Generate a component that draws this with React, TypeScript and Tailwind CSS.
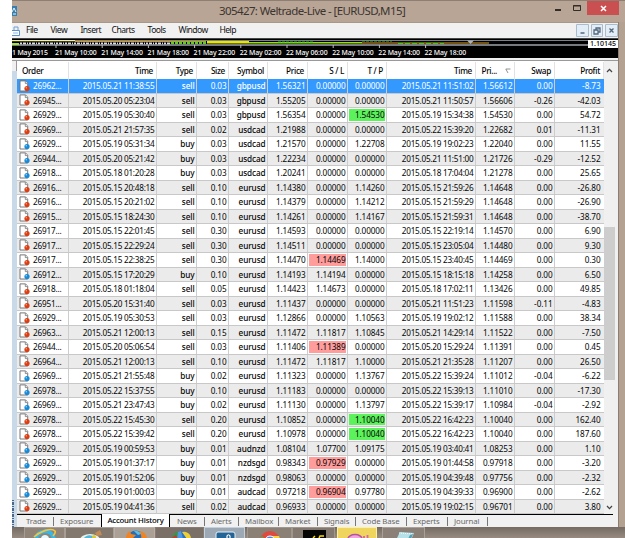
import { ReactNode } from "react";
import clsx from "clsx";

type Trade = {
  order: string;
  openTime: string;
  type: "buy" | "sell";
  size: string;
  symbol: string;
  price: string;
  sl: string;
  tp: string;
  closeTime: string;
  closePrice: string;
  swap: string;
  profit: string;
  hit?: "sl" | "tp";
};

const parseTrade = (line: string): Trade => {
  const f = line.split(" ");
  return {
    order: f[0] + "...",
    openTime: "2015.05." + f[1] + " " + f[2],
    type: f[3] as Trade["type"],
    size: f[4],
    symbol: f[5],
    price: f[6],
    sl: f[7],
    tp: f[8],
    closeTime: "2015.05." + f[9] + " " + f[10],
    closePrice: f[11],
    swap: f[12],
    profit: f[13],
    hit: f[14] as Trade["hit"],
  };
};

const trades = `26962 21 11:38:55 sell 0.03 gbpusd 1.56321 0.00000 0.00000 21 11:51:02 1.56612 0.00 -8.73
26945 20 05:23:04 sell 0.03 gbpusd 1.55205 0.00000 0.00000 21 11:50:57 1.56606 -0.26 -42.03
26929 19 05:30:40 sell 0.03 gbpusd 1.56354 0.00000 1.54530 19 15:34:38 1.54530 0.00 54.72 tp
26969 21 21:57:35 sell 0.02 usdcad 1.21988 0.00000 0.00000 22 15:39:20 1.22682 0.01 -11.31
26929 19 05:31:34 buy 0.03 usdcad 1.21570 0.00000 1.22708 19 19:02:23 1.22040 0.00 11.55
26944 20 05:21:42 buy 0.03 usdcad 1.22234 0.00000 0.00000 21 11:51:00 1.21726 -0.29 -12.52
26918 18 01:20:28 buy 0.03 usdcad 1.20241 0.00000 0.00000 18 17:04:04 1.21278 0.00 25.65
26916 15 20:48:18 sell 0.10 eurusd 1.14380 0.00000 1.14260 15 21:59:26 1.14648 0.00 -26.80
26916 15 20:21:02 sell 0.10 eurusd 1.14379 0.00000 1.14212 15 21:59:29 1.14648 0.00 -26.90
26915 15 18:24:30 sell 0.10 eurusd 1.14261 0.00000 1.14167 15 21:59:31 1.14648 0.00 -38.70
26917 15 22:01:45 sell 0.30 eurusd 1.14593 0.00000 0.00000 15 22:19:14 1.14570 0.00 6.90
26917 15 22:29:24 sell 0.30 eurusd 1.14511 0.00000 0.00000 15 23:05:04 1.14480 0.00 9.30
26917 15 22:38:25 sell 0.30 eurusd 1.14470 1.14469 1.14000 15 23:40:45 1.14469 0.00 0.30 sl
26912 15 17:20:29 buy 0.10 eurusd 1.14193 1.14194 0.00000 15 18:15:18 1.14258 0.00 6.50
26918 18 01:18:04 sell 0.05 eurusd 1.14423 1.14673 0.00000 18 17:02:11 1.13426 0.00 49.85
26951 20 15:31:40 sell 0.03 eurusd 1.11437 0.00000 0.00000 21 11:51:23 1.11598 -0.11 -4.83
26929 19 05:30:53 sell 0.03 eurusd 1.12866 0.00000 1.10563 19 19:02:12 1.11588 0.00 38.34
26963 21 12:00:13 sell 0.15 eurusd 1.11472 1.11817 1.10845 21 14:29:14 1.11522 0.00 -7.50
26944 20 05:06:54 sell 0.03 eurusd 1.11406 1.11389 0.00000 20 15:29:24 1.11391 0.00 0.45 sl
26964 21 12:00:13 sell 0.10 eurusd 1.11472 1.11817 1.10000 21 21:35:28 1.11207 0.00 26.50
26969 21 21:55:48 buy 0.02 eurusd 1.11323 0.00000 1.13767 22 15:39:24 1.11012 -0.04 -6.22
26978 22 15:37:55 buy 0.10 eurusd 1.11183 0.00000 0.00000 22 15:39:13 1.11010 0.00 -17.30
26969 21 23:47:43 buy 0.02 eurusd 1.11130 0.00000 1.13797 22 15:39:17 1.10984 -0.04 -2.92
26978 22 15:45:30 sell 0.20 eurusd 1.10852 0.00000 1.10040 22 16:42:23 1.10040 0.00 162.40 tp
26978 22 15:39:42 sell 0.20 eurusd 1.10978 0.00000 1.10040 22 16:42:23 1.10040 0.00 187.60 tp
26929 19 00:59:53 buy 0.01 audnzd 1.08104 1.07700 1.09175 19 03:40:41 1.08253 0.00 1.10
26929 19 01:37:17 buy 0.01 nzdsgd 0.98343 0.97929 0.00000 19 01:44:58 0.97918 0.00 -3.20 sl
26929 19 01:52:06 buy 0.01 nzdsgd 0.98063 0.00000 0.00000 19 04:39:48 0.97756 0.00 -2.32
26929 19 01:00:03 buy 0.01 audcad 0.97218 0.96904 0.97780 19 04:39:33 0.96900 0.00 -2.62 sl
26929 19 04:41:36 sell 0.02 audcad 0.96933 0.00000 0.00000 19 19:02:15 0.96701 0.00 3.80`
  .split("\n")
  .map(parseTrade);

const columns =
  "grid grid-cols-[52px_88px_40px_32px_39px_40px_40px_39px_89px_39px_40px_49px]";

const OrderIcon = ({ type }: { type: Trade["type"] }) => (
  <svg width="11" height="12" viewBox="0 0 11 12" className="shrink-0">
    <path d="M1 .9h5.6l2.1 2.4V11H1z" fill="#fff" stroke="#777" />
    <path d="M6.3 1v2.6h2.4" fill="#eee" stroke="#777" strokeWidth=".8" />
    <circle
      cx="8"
      cy="8.6"
      r="2.6"
      fill={type === "sell" ? "#dc3d12" : "#168ad6"}
    />
    <circle
      cx="7.3"
      cy="7.7"
      r=".8"
      fill={type === "sell" ? "#ff9a70" : "#8ad4ff"}
    />
  </svg>
);

const Cell = ({
  children,
  mark,
  last,
}: {
  children: ReactNode;
  mark?: "sl" | "tp";
  last?: boolean;
}) => (
  <div
    className={clsx(
      "flex min-w-0",
      last ? "pr-[2px]" : "border-r border-[#cdcdcd]",
    )}
  >
    <span
      className={clsx(
        "flex flex-1 items-center justify-end whitespace-nowrap",
        mark ? "m-px pr-[0.5px]" : "pr-[1.5px]",
        mark === "sl" && "bg-[#ff9c9c]",
        mark === "tp" && "bg-[#5cf25c]",
      )}
    >
      {children}
    </span>
  </div>
);

const TradeRow = ({ trade, index }: { trade: Trade; index: number }) => (
  <div
    className={clsx(
      columns,
      "min-h-0 flex-1 border-b border-[#c8c8c8] tracking-[-0.1px]",
      index === 0 && "bg-[#3399ff] text-white",
      index > 0 && (index % 2 ? "bg-[#ebebeb]" : "bg-white"),
    )}
  >
    <div className="flex items-center gap-[3px] border-r border-[#cdcdcd] pl-[2px] tracking-[-0.2px]">
      <OrderIcon type={trade.type} />
      {trade.order}
    </div>
    <Cell>
      <span className="tracking-[-0.25px]">{trade.openTime}</span>
    </Cell>
    <Cell>
      <span className="font-medium">{trade.type}</span>
    </Cell>
    <Cell>{trade.size}</Cell>
    <Cell>
      <span className="font-medium">{trade.symbol}</span>
    </Cell>
    <Cell>{trade.price}</Cell>
    <Cell mark={trade.hit === "sl" ? "sl" : undefined}>{trade.sl}</Cell>
    <Cell mark={trade.hit === "tp" ? "tp" : undefined}>{trade.tp}</Cell>
    <Cell>
      <span className="tracking-[-0.25px]">{trade.closeTime}</span>
    </Cell>
    <Cell>{trade.closePrice}</Cell>
    <Cell>{trade.swap}</Cell>
    <Cell last>{trade.profit}</Cell>
  </div>
);

const HeaderCell = ({ children }: { children: ReactNode }) => (
  <div className="flex items-center justify-end border-r border-[#e2e2e2] pr-[3px] whitespace-nowrap">
    {children}
  </div>
);

const TableHeader = () => (
  <div
    className={clsx(
      columns,
      "h-[18px] shrink-0 bg-white pt-px font-medium tracking-[-0.3px]",
    )}
  >
    <div className="flex items-center border-r border-[#e2e2e2] pl-[5px]">
      Order
    </div>
    <HeaderCell>Time</HeaderCell>
    <HeaderCell>Type</HeaderCell>
    <HeaderCell>Size</HeaderCell>
    <HeaderCell>Symbol</HeaderCell>
    <HeaderCell>Price</HeaderCell>
    <HeaderCell>S / L</HeaderCell>
    <HeaderCell>T / P</HeaderCell>
    <HeaderCell>Time</HeaderCell>
    <HeaderCell>
      Pri...
      <svg width="6" height="6" viewBox="0 0 6 6" className="ml-2">
        <path d="M5.5 1H.8l2.2 4" fill="none" stroke="#777" strokeWidth=".8" />
      </svg>
    </HeaderCell>
    <HeaderCell>Swap</HeaderCell>
    <HeaderCell>Profit</HeaderCell>
  </div>
);

const Chevron = ({ down }: { down?: boolean }) => (
  <svg width="7" height="5" viewBox="0 0 7 5">
    <path
      d={down ? "M1 1l2.5 2.6L6 1" : "M1 4l2.5-2.6L6 4"}
      fill="none"
      stroke="#444"
      strokeWidth="1.3"
    />
  </svg>
);

const ScrollBar = () => (
  <div className="flex flex-1 flex-col items-center bg-[#f0f0f0] pr-[3px]">
    <div className="flex h-[18px] items-center">
      <Chevron />
    </div>
    <div className="mt-[148px] h-[153px] w-[11px] bg-[#cdcdcd]" />
    <div className="mt-auto flex h-[13px] items-center">
      <Chevron down />
    </div>
  </div>
);

const TitleBar = () => (
  <header className="flex h-[22px] shrink-0 border-t border-[#8d7f74] bg-[#b8a595] text-[#3b3430]">
    <svg width="6" height="10" viewBox="0 0 6 10" className="mt-[5px]">
      <path d="M0 0h5v10H0z" fill="#3a7eae" />
      <path d="M0 6l2-4 2 4M1 8h3" fill="none" stroke="#e8f4fc" />
    </svg>
    <h1 className="flex-1 pl-[201px] pt-[2px] text-[11.5px] leading-4 tracking-[-0.6px] whitespace-nowrap">
      305427: Weltrade-Live - [EURUSD,M15]
    </h1>
    <svg width="40" height="14" viewBox="0 0 40 14" className="shrink-0">
      <path d="M8 9h6" stroke="#332d29" strokeWidth="2" />
      <path d="M26.5 4.5h7v5h-7zM26 5h8" fill="none" stroke="#332d29" />
    </svg>
    <div className="mr-[6px] flex h-[14px] w-[32px] items-center justify-center bg-[#c94f50]">
      <svg width="7" height="7" viewBox="0 0 7 7">
        <path d="M1 1l5 5M6 1L1 6" stroke="#fff" strokeWidth="1.5" />
      </svg>
    </div>
  </header>
);

const MenuBar = () => (
  <nav className="flex h-4 shrink-0 items-center border-t border-[#a8988a] bg-[#f1f1f1] text-[8.6px] tracking-[-0.55px] text-[#111]">
    <svg width="9" height="12" viewBox="0 0 9 12" className="mr-[5px]">
      <path d="M2 5V2h4v3" fill="none" stroke="#6f9fd8" />
      <path d="M0 5.5h7.5v5H0" fill="#fff" stroke="#5c8fd0" />
      <path d="M1 8h5" stroke="#8db6e6" />
    </svg>
    <span className="w-[24.5px]">File</span>
    <span className="w-[30px]">View</span>
    <span className="w-[31px]">Insert</span>
    <span className="w-[36px]">Charts</span>
    <span className="w-[31px]">Tools</span>
    <span className="w-[41px]">Window</span>
    <span>Help</span>
    <svg width="42" height="14" viewBox="0 0 42 14" className="ml-auto">
      <g fill="#e3edf7" stroke="#a9bccd">
        <path d="M.5.5h12v12H.5zM15.5.5h11v12h-11zM29.5.5h12v12h-12z" />
      </g>
      <g fill="none" stroke="#53677b" strokeWidth="1.3">
        <path d="M4.5 9h4M18 6h4v4h-4zM20 6V4h4v4h-2M33.5 4.5l4 4M37.5 4.5l-4 4" />
      </g>
    </svg>
  </nav>
);

const axisLabels = [
  "21 May 10:00",
  "21 May 14:00",
  "21 May 18:00",
  "21 May 22:00",
  "22 May 02:00",
  "22 May 06:00",
  "22 May 10:00",
  "22 May 14:00",
  "22 May 18:00",
];

const ChartStrip = () => (
  <section className="relative h-5 shrink-0 bg-black text-white">
    <svg width="606" height="12" viewBox="0 0 606 12" className="block">
      <path d="M0 .5h606" stroke="#777" strokeWidth=".6" />
      <path d="M0 2.5h576" stroke="#9ca0a6" strokeWidth=".8" />
      <path d="M0 2.7h63" stroke="#f2f2a0" strokeWidth="1.2" />
      <path d="M63 3.3h131" stroke="#c79a32" strokeWidth="1.2" />
      <path d="M8 5.4h151" stroke="#ddd" strokeWidth="2" strokeDasharray="2 1 3 1 1 1" />
      <path d="M159 4.7h36" stroke="#63cb20" strokeWidth="2.4" strokeDasharray="3 1" />
      <path d="M195 4.3h42" stroke="#e6e600" strokeWidth="2.4" />
      <path d="M237 4.7h152" stroke="#95df18" strokeWidth="1.4" />
      <path d="M266 4h36M350 4h30" stroke="#19db20" strokeDasharray="3 1" />
      <path d="M350 5h127" stroke="#745211" strokeWidth="2" />
      <path d="M386 5.6h46" stroke="#20e020" strokeDasharray="5 2" />
      <path d="M0 7h577" stroke="#9ea3aa" strokeWidth="1.5" />
      <path d="M0 6h7" stroke="#a2e040" strokeWidth="2" />
      <path d="M455 2.5h7l-3.5 3.5z" fill="#a9b5c2" />
      {axisLabels.map((label, i) => (
        <path key={label} d={`M${44 + i * 46.2} 7v3`} stroke="#bbb" />
      ))}
    </svg>
    <div className="-mt-[2px] flex text-[6.9px] leading-[9px] font-medium whitespace-nowrap">
      <span className="w-[43px] shrink-0 tracking-[-0.15px]">1 May 2015</span>
      {axisLabels.map((label) => (
        <span key={label} className="w-[46.2px] shrink-0 tracking-[-0.12px]">
          {label}
        </span>
      ))}
    </div>
    <span className="absolute top-[2px] right-0 h-[8px] w-[30px] bg-white text-center text-[7px] leading-[8px] font-medium text-black">
      1.10145
    </span>
  </section>
);

const Tab = ({ label, width }: { label: string; width: string }) => (
  <div className={clsx("flex shrink-0 items-center", width)}>
    <span className="flex-1 whitespace-nowrap">{label}</span>
    <span className="mr-[6px] h-[9px] w-px bg-[#777]" />
  </div>
);

const TabBar = () => (
  <div className="flex h-[13px] shrink-0 bg-[#f1f1f1] text-[7.8px] tracking-[-0.1px] text-[#686868]">
    <div className="flex flex-1 border-t border-black pl-[9px]">
      <Tab label="Trade" width="w-[34px]" />
      <span className="flex w-[41px] items-center">Exposure</span>
      <span className="-mt-px flex w-[69px] shrink-0 items-center justify-center border-x border-black bg-white font-medium tracking-[-0.2px] whitespace-nowrap text-black">
        Account History
      </span>
      <span className="w-[7px] shrink-0" />
      <Tab label="News" width="w-[34px]" />
      <Tab label="Alerts" width="w-[34px]" />
      <Tab label="Mailbox" width="w-[40px]" />
      <Tab label="Market" width="w-[39px]" />
      <Tab label="Signals" width="w-[38px]" />
      <Tab label="Code Base" width="w-[51px]" />
      <Tab label="Experts" width="w-[41px]" />
      <Tab label="Journal" width="w-[40px]" />
    </div>
    <div className="w-[5px]" />
  </div>
);

const TaskButton = ({
  className,
  children,
}: {
  className: string;
  children: ReactNode;
}) => (
  <div
    className={clsx(
      "flex shrink-0 justify-center border-x border-t",
      className,
    )}
  >
    <svg width="36" height="10" viewBox="0 0 36 10">
      {children}
    </svg>
  </div>
);

const TaskBar = () => (
  <footer className="flex h-[11px] shrink-0 bg-gradient-to-b from-[#756b63] to-[#978b81] pl-3">
    <TaskButton className="w-[41px] border-[#a79d94] bg-[#908479]">
      <path d="M9 12c0-11 17-12 18 0" fill="none" stroke="#31b8ed" strokeWidth="4" />
      <path d="M7 9C12 4 24-1 28 3c1 2-1 4-2 5" fill="none" stroke="#f5c33b" strokeWidth="1.7" />
      <path d="M14 10c1-4 7-4 8 0z" fill="#e7f8ff" />
    </TaskButton>
    <TaskButton className="w-[49px] border-[#a79d94] bg-[#83786e]">
      <ellipse cx="18" cy="12" rx="10" ry="6" fill="#e9f1e9" />
      <path d="M12 10c3-4 8-3 10-1l-3 3z" fill="#57b5d5" />
      <path d="M23 5l5-3 2 5-5 1z" fill="#c58b55" />
      <circle cx="22" cy="9" r="2" fill="#d8c940" />
    </TaskButton>
    <TaskButton className="w-[41px] border-[#b8aea5] bg-[#aaa096]">
      <circle cx="19" cy="12" r="9.5" fill="#286eb5" />
      <path d="M9 10c0-4 2-6 4-7l1 3 5 1-3 3zM22 3c6 1 8 4 8 8h-6c1-4-1-6-2-8z" fill="#ef8424" />
      <path d="M17 3c3-1 6 1 7 3l-3 1z" fill="#61bee2" />
    </TaskButton>
    <TaskButton className="w-[49px] border-[#887c72] bg-[#7b7067]">
      <circle cx="21" cy="11" r="8" fill="#2c70c4" />
      <path d="M10 11c0-4 2-6 6-7v7z" fill="#32964b" />
      <path d="M20 4c5-1 9 2 9 7h-4z" fill="#efcf35" />
      <path d="M16 4l3-1 2 8h-6z" fill="#4d9ae2" />
      <path d="M8 11l6-4 2 4z" fill="#c23c32" />
    </TaskButton>
    <TaskButton className="w-[41px] border-[#c4d1dd] bg-[#9ca8b3]">
      <rect x="9" y="4" width="19" height="9" rx="2" fill="#236494" stroke="#e7f1f8" />
      <path d="M20 11V8q1.5-2.5 3 0v3" fill="none" stroke="#fff" strokeWidth="1.2" />
    </TaskButton>
    <TaskButton className="ml-[2px] w-[45px] border-[#a1968c] bg-[#8b8076]">
      <circle cx="18" cy="13" r="10" fill="#df493e" />
      <path d="M8 13a10 10 0 0 1 2-5l5 5z" fill="#4dac54" />
      <path d="M19 8h8a10 10 0 0 1 1 5h-7z" fill="#f3d446" />
      <circle cx="18" cy="13" r="5" fill="#4c89d1" stroke="#fff" />
    </TaskButton>
    <TaskButton className="w-[43px] border-[#a1968c] bg-[#847970]">
      <path d="M7 2h23v8H7z" fill="#050505" />
      <path d="M17 10l2-2M23 10l1-2h4" stroke="#ffdc00" strokeWidth="1.5" />
    </TaskButton>
    <TaskButton className="ml-[2px] w-[40px] border-[#fff0a0] bg-[#efd45e]">
      <ellipse cx="16" cy="11" rx="7" ry="4.5" fill="#f0a5dd" stroke="#b352a0" strokeWidth="1.5" />
      <path d="M25 8v3M28.5 7v4" stroke="#ce65b7" strokeWidth="1.8" />
    </TaskButton>
    <TaskButton className="ml-[5px] w-[43px] border-[#aaa097] bg-[#8b8077]">
      <path d="M14 4l14 1-3 7H10z" fill="#b8e0e8" />
      <path d="M13 5l14 1" stroke="#efffff" strokeDasharray="1 1" />
      <path d="M24 7l3-1-2 5h-3z" fill="#559fae" />
    </TaskButton>
  </footer>
);

const App = () => (
  <main className="flex h-[538px] w-[625px] overflow-hidden bg-white pl-3 font-['Noto_Sans','Open_Sans',sans-serif] text-[8.2px] leading-[11px] text-[#050505]">
    <div className="flex min-w-0 flex-1 flex-col">
      <TitleBar />
      <div className="flex h-[505px] shrink-0">
        <div className="flex w-[606px] shrink-0 flex-col">
          <MenuBar />
          <ChartStrip />
          <div className="h-[3px] shrink-0 border-b border-[#999] bg-[#f0f0f0]" />
          <div className="flex min-h-0 flex-1">
            <aside className="flex w-[5px] shrink-0 flex-col bg-[#c9d9e8]">
              <div className="h-[10px] border-r border-[#999] bg-[#f0f0f0]" />
              <div className="mt-auto h-[28px] overflow-hidden">
                <svg width="4" height="28" viewBox="0 0 4 28">
                  <path d="M1 1v27" stroke="#48698b" strokeWidth="2" strokeDasharray="1 1 3 1" />
                </svg>
              </div>
            </aside>
            <div className="flex min-w-0 flex-1 flex-col">
              <div className="flex min-h-0 flex-1">
                <div className="flex w-[587px] shrink-0 flex-col">
                  <TableHeader />
                  <div className="flex min-h-0 flex-1 flex-col">
                    {trades.map((trade, i) => (
                      <TradeRow key={i} trade={trade} index={i} />
                    ))}
                  </div>
                </div>
                <ScrollBar />
              </div>
              <TabBar />
            </div>
          </div>
        </div>
        <div className="flex-1 border-l border-[#8d7e72] bg-[#b3a291]" />
      </div>
      <TaskBar />
    </div>
  </main>
);

export default App;
